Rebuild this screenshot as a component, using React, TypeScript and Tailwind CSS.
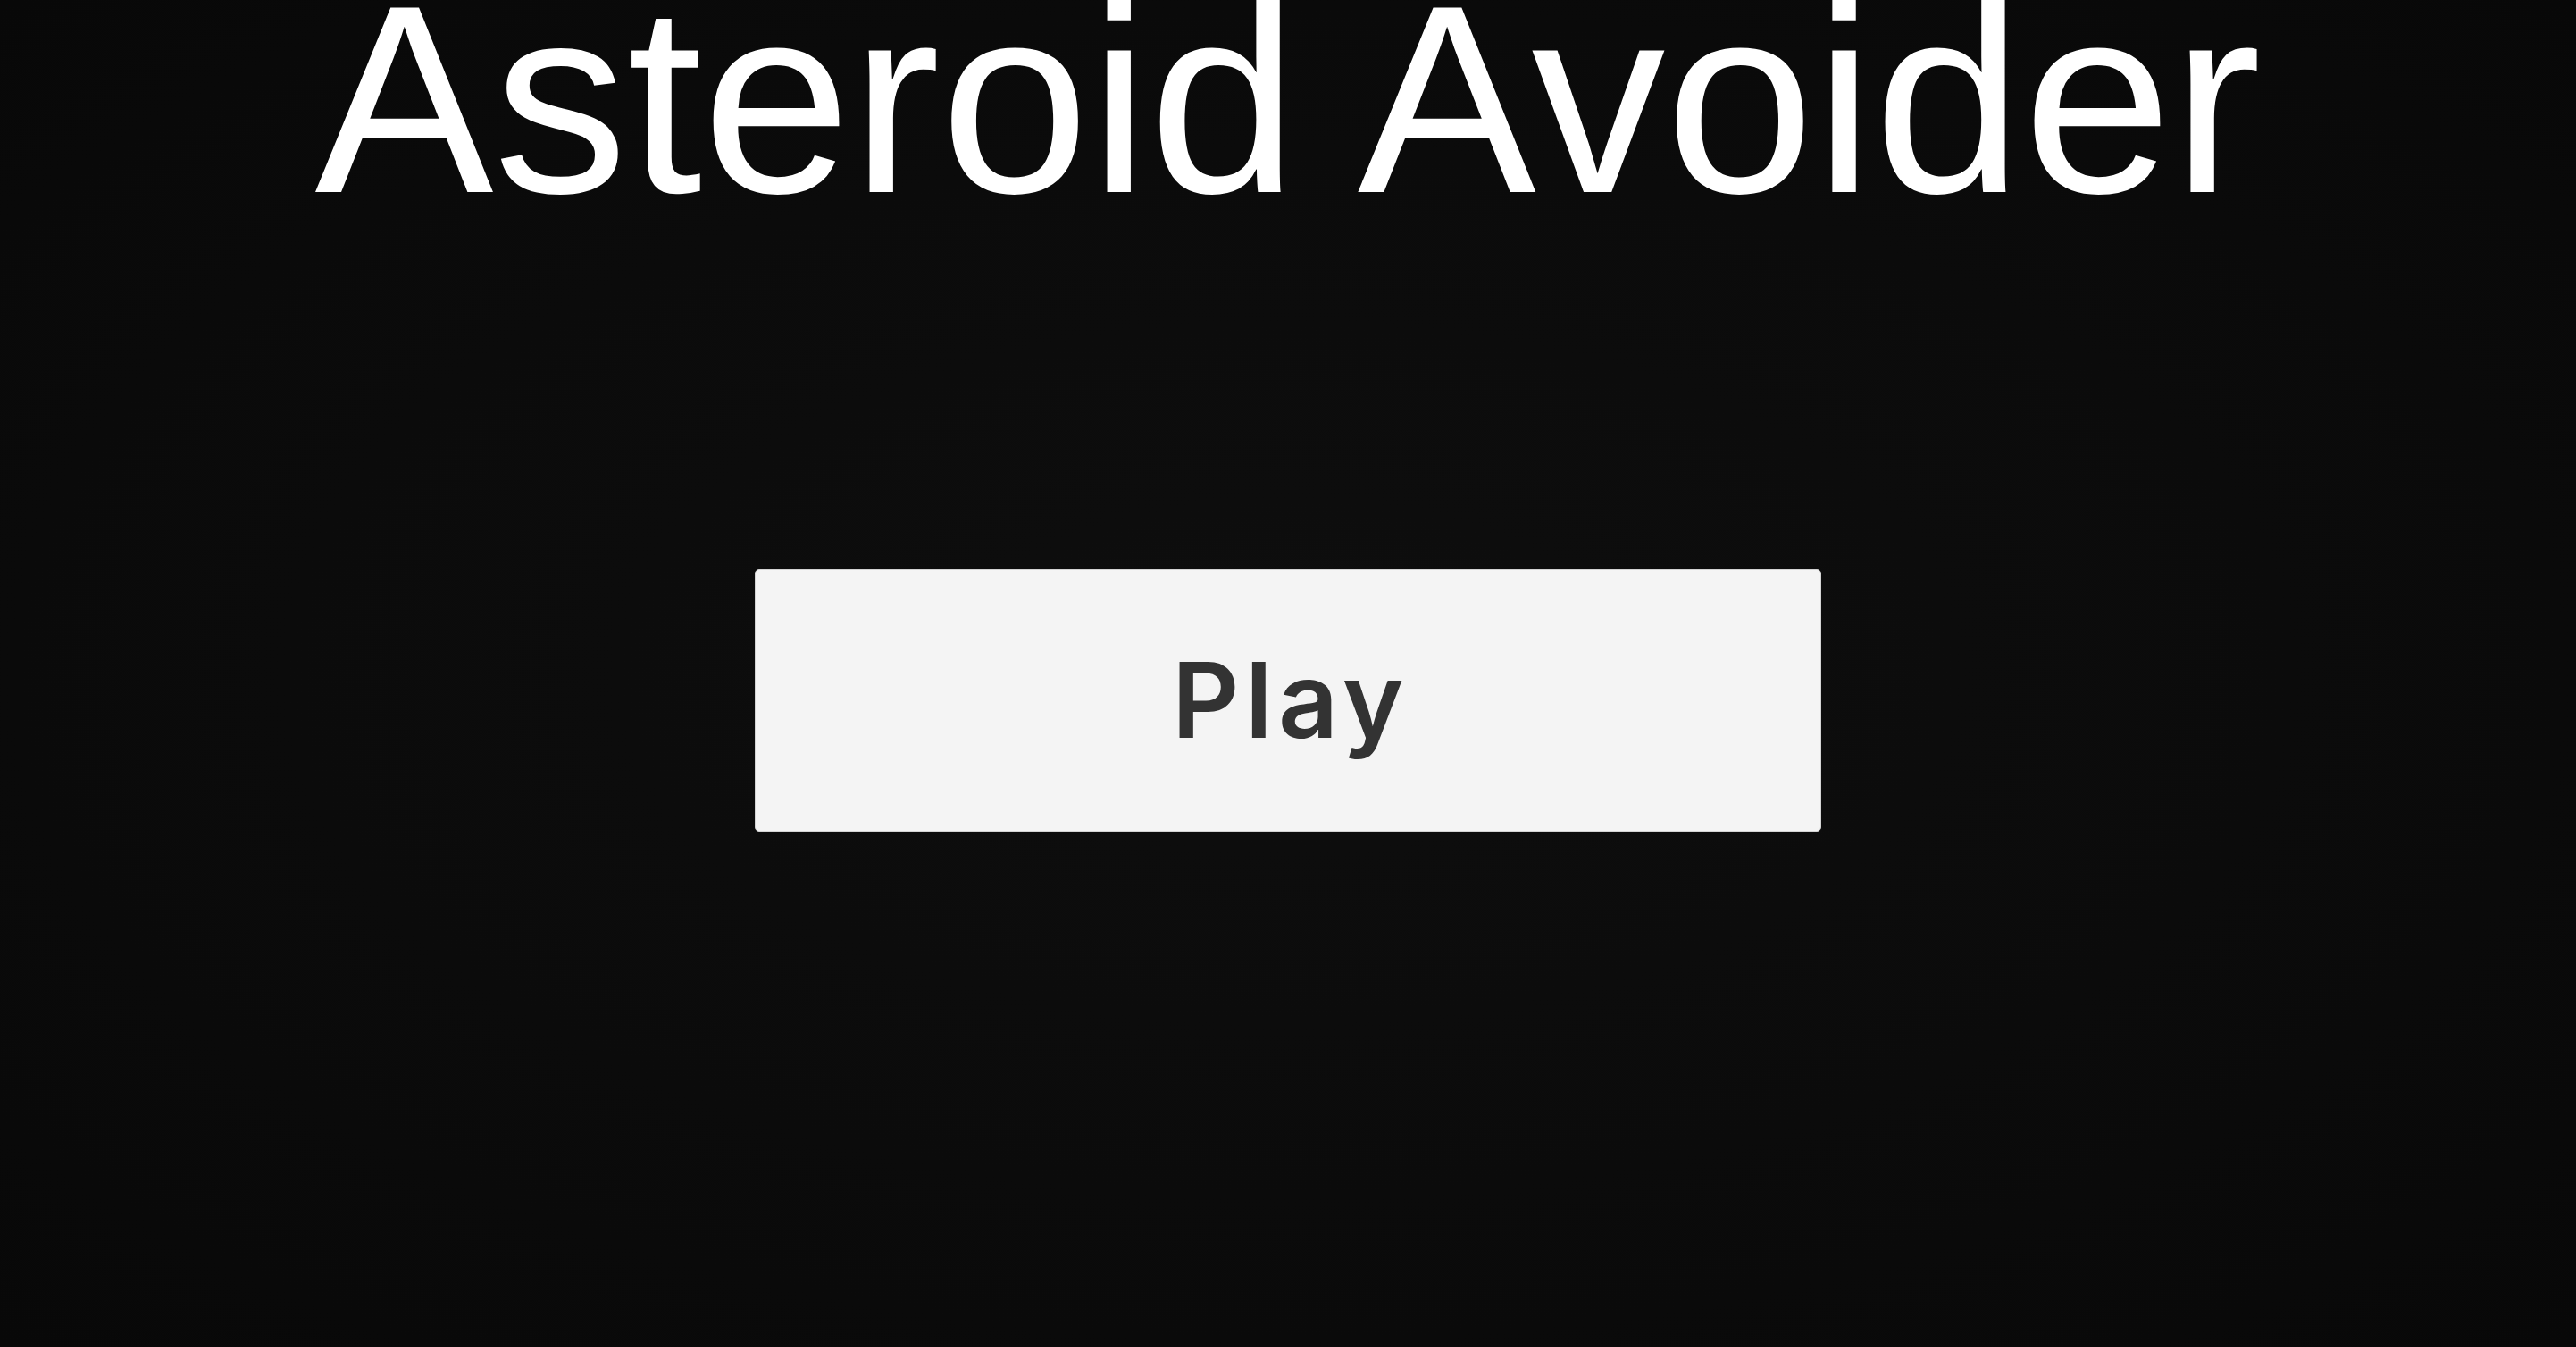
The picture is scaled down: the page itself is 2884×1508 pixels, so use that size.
export default function App() {
  return (
    <div className="h-screen w-full overflow-hidden bg-[radial-gradient(ellipse_at_center,#0e0e0e_0%,#0b0b0b_55%,#080808_100%)]">
      <div className="flex flex-col items-center">
        {/* Title */}
        <h1 className="whitespace-nowrap text-[300px] leading-[222px] text-white font-['Liberation_Sans',Arial,sans-serif] font-normal">
          Asteroid Avoider
        </h1>

        {/* Start button */}
        <button className="mt-[415px] flex h-[294px] w-[1194px] items-center justify-center rounded-[5px] border border-[#d4d4d4] bg-[#f4f4f4] pl-[6px] font-['Inter',sans-serif] text-[117px] font-semibold tracking-[0.055em] text-[#333333]">
          Play
        </button>
      </div>
    </div>
  );
}
